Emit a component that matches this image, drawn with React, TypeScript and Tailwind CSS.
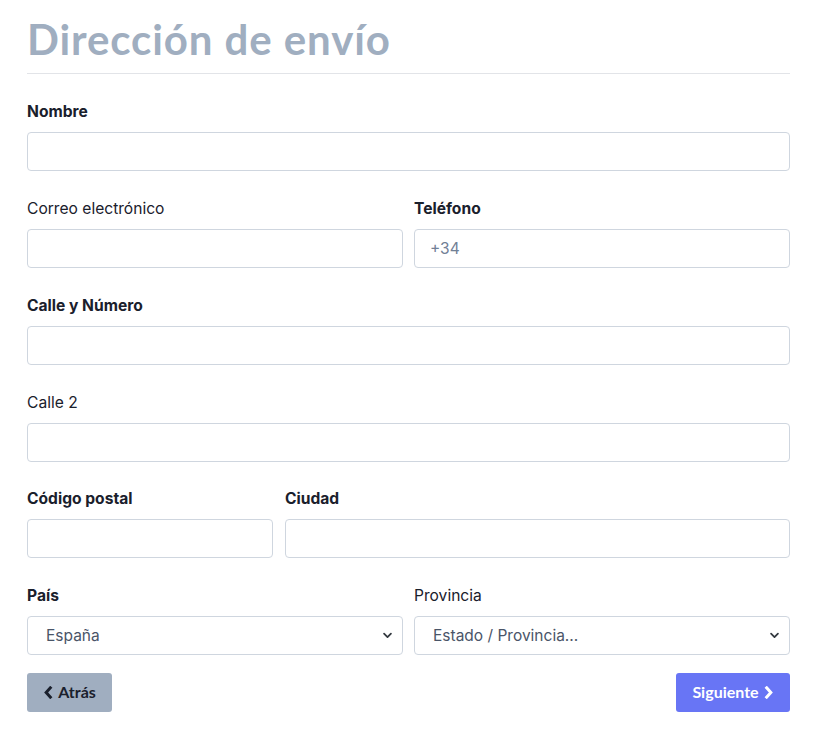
import React from "react";

const inputCls =
  "block w-full h-[39px] rounded-[4px] border border-[#cfd6df] bg-white px-[15px] text-[15.5px] text-[#4a5568] placeholder:text-[#718096] outline-none";

const Label = ({ children, bold = true }: { children: React.ReactNode; bold?: boolean }) => (
  <label
    className={`block h-6 leading-6 mb-2 text-[15.6px] text-[#1a202c] ${
      bold ? "font-bold" : "font-normal"
    }`}
  >
    {children}
  </label>
);

const Chevron = () => (
  <svg
    className="pointer-events-none absolute right-[10px] top-1/2 -translate-y-1/2"
    width="11"
    height="11"
    viewBox="0 0 16 16"
    fill="none"
    stroke="#343a40"
    strokeWidth="2.6"
    strokeLinecap="round"
    strokeLinejoin="round"
  >
    <path d="M3 6l5 5 5-5" />
  </svg>
);

const Select = ({ value }: { value: string }) => (
  <div className="relative">
    <select className={`${inputCls} appearance-none pl-[18px]`} defaultValue={value}>
      <option>{value}</option>
    </select>
    <Chevron />
  </div>
);

const App = () => {
  return (
    <div className="min-h-[740px] bg-white font-['Inter',sans-serif]">
      <div className="mx-[27px] w-[763px]">
        {/* título */}
        <h1 className="pt-[15px] pb-[10px] text-[42px] leading-[48px] font-bold text-[#a0aec0] font-['Lato','Noto_Sans',sans-serif] tracking-[0.9px]">
          Dirección de envío
        </h1>
        <hr className="border-t border-[#e2e4e8] mb-[26px]" />

        <div className="mb-[26px]">
          <Label>Nombre</Label>
          <input className={inputCls} />
        </div>

        <div className="grid grid-cols-2 gap-x-[11px] mb-[26px]">
          <div>
            <Label bold={false}>Correo electrónico</Label>
            <input className={inputCls} />
          </div>
          <div>
            <Label>Teléfono</Label>
            <input className={inputCls} placeholder="+34" />
          </div>
        </div>

        <div className="mb-[25.6px]">
          <Label>Calle y Número</Label>
          <input className={inputCls} />
        </div>

        <div className="mb-[25.6px]">
          <Label bold={false}>Calle 2</Label>
          <input className={inputCls} />
        </div>

        <div className="grid grid-cols-[246px_1fr] gap-x-3 mb-[25.6px]">
          <div>
            <Label>Código postal</Label>
            <input className={inputCls} />
          </div>
          <div>
            <Label>Ciudad</Label>
            <input className={inputCls} />
          </div>
        </div>

        <div className="grid grid-cols-2 gap-x-[11px] mb-[18px]">
          <div>
            <Label>País</Label>
            <Select value="España" />
          </div>
          <div>
            <Label bold={false}>Provincia</Label>
            <Select value="Estado / Provincia..." />
          </div>
        </div>

        <div className="flex justify-between">
          <button className="flex items-center gap-[5px] h-[39px] w-[85px] justify-center rounded-[3px] bg-[#a0aec0] text-[16px] font-bold text-[#1a202c] font-['Lato','Noto_Sans',sans-serif]">
            <svg width="10" height="13" viewBox="0 0 10 14" fill="none" stroke="#1a202c" strokeWidth="3.2" strokeLinecap="square">
              <path d="M7.5 2L3 7l4.5 5" />
            </svg>
            Atrás
          </button>
          <button className="flex items-center gap-[5px] h-[39px] w-[114px] justify-center rounded-[3px] bg-[#6875f5] text-[16px] font-bold text-white font-['Lato','Noto_Sans',sans-serif]">
            Siguiente
            <svg width="10" height="13" viewBox="0 0 10 14" fill="none" stroke="#ffffff" strokeWidth="3.2" strokeLinecap="square">
              <path d="M2.5 2L7 7l-4.5 5" />
            </svg>
          </button>
        </div>
      </div>
    </div>
  );
};

export default App;
